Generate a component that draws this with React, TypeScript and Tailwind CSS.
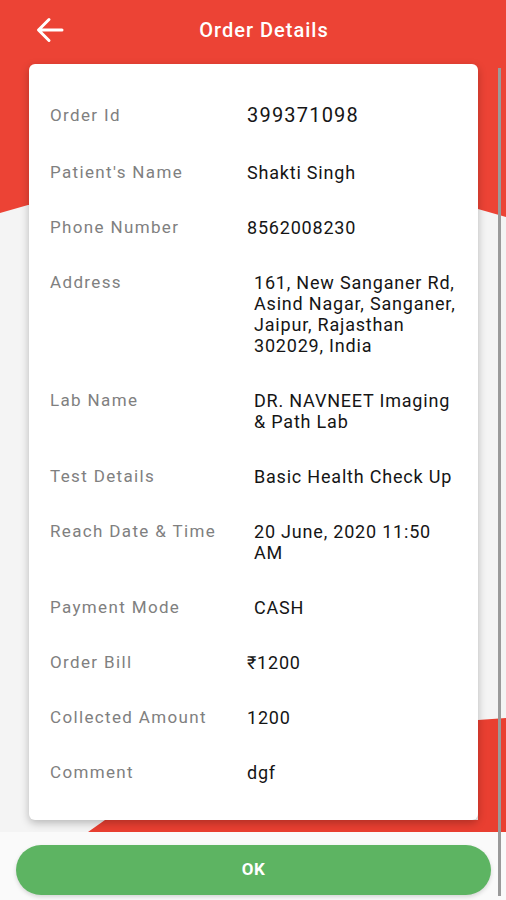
import React from "react";

const rows: { label: string; value: React.ReactNode; indent?: boolean; big?: boolean }[] = [
  { label: "Order Id", value: "399371098", big: true },
  { label: "Patient's Name", value: "Shakti Singh" },
  { label: "Phone Number", value: "8562008230" },
  {
    label: "Address",
    value: (
      <>
        161, New Sanganer Rd,
        <br />
        Asind Nagar, Sanganer,
        <br />
        Jaipur, Rajasthan
        <br />
        302029, India
      </>
    ),
    indent: true,
  },
  {
    label: "Lab Name",
    value: (
      <>
        DR. NAVNEET Imaging
        <br />& Path Lab
      </>
    ),
    indent: true,
  },
  { label: "Test Details", value: "Basic Health Check Up", indent: true },
  {
    label: "Reach Date & Time",
    value: (
      <>
        20 June, 2020 11:50
        <br />
        AM
      </>
    ),
    indent: true,
  },
  { label: "Payment Mode", value: "CASH", indent: true },
  { label: "Order Bill", value: "₹1200" },
  { label: "Collected Amount", value: "1200" },
  { label: "Comment", value: "dgf" },
];

export default function App() {
  return (
    <div
      className="relative w-full h-[900px] overflow-hidden bg-[#f4f4f4]"
      style={{ fontFamily: "Roboto, 'Noto Sans', sans-serif" }}
    >
      {/* decorative red shapes */}
      <div
        className="absolute inset-0 bg-[#ec4335]"
        style={{ clipPath: "polygon(0 0, 506px 0, 506px 217px, 478px 209px, 28px 205px, 0 213px)" }}
      />
      <div
        className="absolute inset-0 bg-[#e93f31]"
        style={{
          clipPath:
            "polygon(478px 720px, 506px 718px, 506px 832px, 88px 832px, 105px 820px, 478px 820px)",
        }}
      />
      <div className="absolute left-0 right-0 top-[832px] h-[68px] bg-[#fafafa]" />
      {/* scrollbar */}
      <div className="absolute left-[498px] top-[68px] w-[3px] h-[828px] bg-[#9a9a9a]" />

      <div className="relative flex flex-col">
        <div className="h-[60px] flex items-center relative">
          <svg
            className="absolute left-[36px] top-[17px]"
            width="28"
            height="26"
            viewBox="0 0 28 26"
            fill="none"
            stroke="white"
            strokeWidth="3"
            strokeLinecap="round"
            strokeLinejoin="round"
          >
            <path d="M26 13H3M13 2.5L2.5 13L13 23.5" />
          </svg>
          <div className="w-full text-center text-white text-[20px] tracking-[1px] font-medium pl-[22px]">
            Order Details
          </div>
        </div>

        <div className="ml-[29px] mt-[4px] w-[449px] h-[756px] bg-white rounded-[6px] shadow-[0_3px_8px_rgba(0,0,0,0.25)] pt-[38px] pl-[21px] pr-[4px] flex flex-col gap-[34px]">
          {rows.map((r) => (
            <div
              key={r.label}
              className={"flex items-center " + (r.big ? "leading-[26px]" : "leading-[21px]")}
            >
              <div className="w-[197px] shrink-0 self-start text-[17px] tracking-[1.35px] text-[#808080] whitespace-nowrap">
                {r.label}
              </div>
              <div
                className={
                  "self-start whitespace-nowrap text-[#151515] " +
                  (r.indent ? "pl-[7px] " : "") +
                  (r.big ? "text-[20px] tracking-[1.2px]" : "text-[18px] tracking-[0.8px]")
                }
              >
                {r.value}
              </div>
            </div>
          ))}
        </div>

        <div className="mt-[25px] ml-[16px] w-[475px] h-[50px] rounded-full bg-[#5db462] flex items-center justify-center text-white font-bold text-[17px] tracking-[0.5px] shadow-[0_2px_4px_rgba(0,0,0,0.15)]">
          OK
        </div>
      </div>
    </div>
  );
}
